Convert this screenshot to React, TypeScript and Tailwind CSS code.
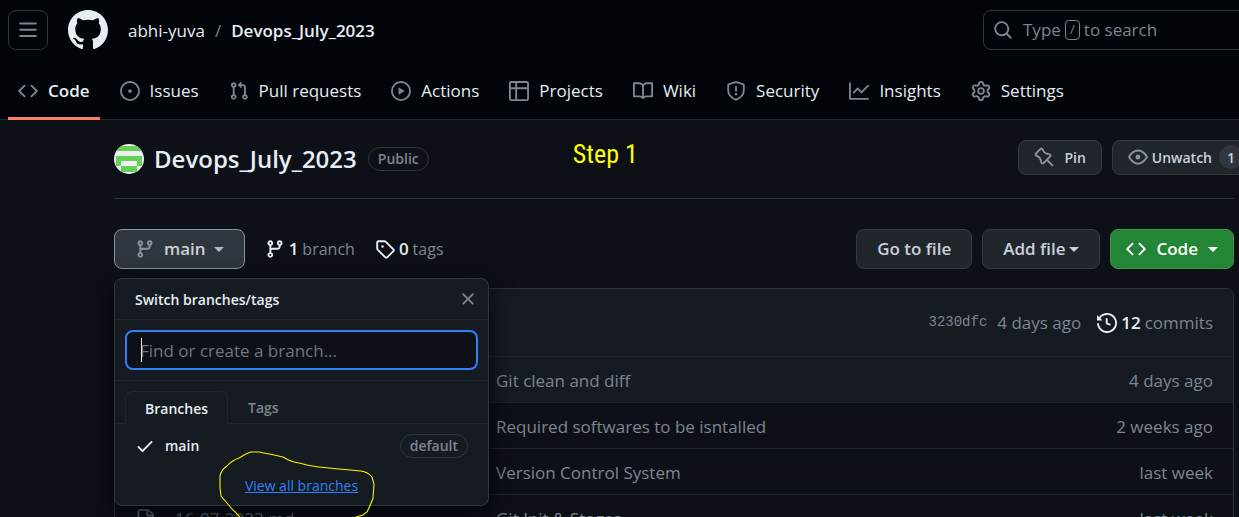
import type { ReactNode } from 'react';

const paths = {
  bars: 'M1 2.75A.75.75 0 0 1 1.75 2h12.5a.75.75 0 0 1 0 1.5H1.75A.75.75 0 0 1 1 2.75Zm0 5A.75.75 0 0 1 1.75 7h12.5a.75.75 0 0 1 0 1.5H1.75A.75.75 0 0 1 1 7.75ZM1.75 12h12.5a.75.75 0 0 1 0 1.5H1.75a.75.75 0 0 1 0-1.5Z',
  github:
    'M8 0c4.42 0 8 3.58 8 8a8.013 8.013 0 0 1-5.45 7.59c-.4.08-.55-.17-.55-.38 0-.27.01-1.13.01-2.2 0-.75-.25-1.23-.54-1.48 1.78-.2 3.65-.88 3.65-3.95 0-.88-.31-1.59-.82-2.15.08-.2.36-1.02-.08-2.12 0 0-.67-.22-2.2.82-.64-.18-1.32-.27-2-.27-.68 0-1.36.09-2 .27-1.53-1.03-2.2-.82-2.2-.82-.44 1.1-.16 1.92-.08 2.12-.51.56-.82 1.28-.82 2.15 0 3.06 1.86 3.75 3.64 3.95-.23.2-.44.55-.51 1.07-.46.21-1.61.55-2.33-.66-.15-.24-.6-.83-1.23-.82-.67.01-.27.38.01.53.34.19.73.9.82 1.13.16.45.68 1.31 2.69.94 0 .67.01 1.3.01 1.49 0 .21-.15.45-.55.38A7.995 7.995 0 0 1 0 8c0-4.42 3.58-8 8-8Z',
  search:
    'M10.68 11.74a6 6 0 0 1-7.922-8.982 6 6 0 0 1 8.982 7.922l3.04 3.04a.749.749 0 0 1-.326 1.275.749.749 0 0 1-.734-.215ZM11.5 7a4.499 4.499 0 1 0-8.997 0A4.499 4.499 0 0 0 11.5 7Z',
  code: 'm11.28 3.22 4.25 4.25a.75.75 0 0 1 0 1.06l-4.25 4.25a.749.749 0 0 1-1.275-.326.749.749 0 0 1 .215-.734L13.94 8l-3.72-3.72a.749.749 0 0 1 .326-1.275.749.749 0 0 1 .734.215Zm-6.56 0a.751.751 0 0 1 1.042.018.751.751 0 0 1 .018 1.042L2.06 8l3.72 3.72a.749.749 0 0 1-.326 1.275.749.749 0 0 1-.734-.215L.47 8.53a.75.75 0 0 1 0-1.06Z',
  issue:
    'M8 9.5a1.5 1.5 0 1 0 0-3 1.5 1.5 0 0 0 0 3ZM8 0a8 8 0 1 1 0 16A8 8 0 0 1 8 0ZM1.5 8a6.5 6.5 0 1 0 13 0 6.5 6.5 0 0 0-13 0Z',
  pull: 'M1.5 3.25a2.25 2.25 0 1 1 3 2.122v5.256a2.251 2.251 0 1 1-1.5 0V5.372A2.25 2.25 0 0 1 1.5 3.25Zm5.677-.177L9.573.677A.25.25 0 0 1 10 .854V2.5h1A2.5 2.5 0 0 1 13.5 5v5.628a2.251 2.251 0 1 1-1.5 0V5a1 1 0 0 0-1-1h-1v1.646a.25.25 0 0 1-.427.177L7.177 3.427a.25.25 0 0 1 0-.354ZM3.75 2.5a.75.75 0 1 0 0 1.5.75.75 0 0 0 0-1.5Zm0 9.5a.75.75 0 1 0 0 1.5.75.75 0 0 0 0-1.5Zm8.25.75a.75.75 0 1 0 1.5 0 .75.75 0 0 0-1.5 0Z',
  play: 'M8 0a8 8 0 1 1 0 16A8 8 0 0 1 8 0ZM1.5 8a6.5 6.5 0 1 0 13 0 6.5 6.5 0 0 0-13 0Zm4.879-2.773 4.264 2.559a.25.25 0 0 1 0 .428l-4.264 2.559A.25.25 0 0 1 6 10.559V5.442a.25.25 0 0 1 .379-.215Z',
  table:
    'M0 1.75C0 .784.784 0 1.75 0h12.5C15.216 0 16 .784 16 1.75v12.5A1.75 1.75 0 0 1 14.25 16H1.75A1.75 1.75 0 0 1 0 14.25ZM6.5 6.5v8h7.75a.25.25 0 0 0 .25-.25V6.5Zm8-1.5V1.75a.25.25 0 0 0-.25-.25H6.5V5Zm-13 1.5v7.75c0 .138.112.25.25.25H5v-8ZM5 5V1.5H1.75a.25.25 0 0 0-.25.25V5Z',
  book: 'M0 1.75A.75.75 0 0 1 .75 1h4.253c1.227 0 2.317.59 3 1.501A3.743 3.743 0 0 1 11.006 1h4.245a.75.75 0 0 1 .75.75v10.5a.75.75 0 0 1-.75.75h-4.507a2.25 2.25 0 0 0-1.591.659l-.622.621a.75.75 0 0 1-1.06 0l-.622-.621A2.25 2.25 0 0 0 5.258 13H.75a.75.75 0 0 1-.75-.75Zm7.251 10.324.004-5.073-.002-2.253A2.25 2.25 0 0 0 5.003 2.5H1.5v9h3.757a3.75 3.75 0 0 1 1.994.574ZM8.755 4.75l-.004 7.322a3.752 3.752 0 0 1 1.992-.572H14.5v-9h-3.495a2.25 2.25 0 0 0-2.25 2.25Z',
  shield:
    'M7.467.133a1.748 1.748 0 0 1 1.066 0l5.25 1.68A1.75 1.75 0 0 1 15 3.48V7c0 1.566-.32 3.182-1.303 4.682-.983 1.498-2.585 2.813-5.032 3.855a1.697 1.697 0 0 1-1.33 0c-2.447-1.042-4.049-2.357-5.032-3.855C1.32 10.182 1 8.566 1 7V3.48a1.75 1.75 0 0 1 1.217-1.667Zm.61 1.429a.25.25 0 0 0-.153 0l-5.25 1.68a.25.25 0 0 0-.174.238V7c0 1.358.275 2.666 1.057 3.86.784 1.194 2.121 2.34 4.366 3.297a.196.196 0 0 0 .154 0c2.245-.956 3.582-2.104 4.366-3.298C13.225 9.666 13.5 8.36 13.5 7V3.48a.251.251 0 0 0-.174-.237l-5.25-1.68ZM8.75 4.75v3a.75.75 0 0 1-1.5 0v-3a.75.75 0 0 1 1.5 0ZM9 10.5a1 1 0 1 1-2 0 1 1 0 0 1 2 0Z',
  graph:
    'M1.5 1.75V13.5h13.75a.75.75 0 0 1 0 1.5H.75a.75.75 0 0 1-.75-.75V1.75a.75.75 0 0 1 1.5 0Zm14.28 2.53-5.25 5.25a.75.75 0 0 1-1.06 0L7 7.06 4.28 9.78a.751.751 0 0 1-1.042-.018.751.751 0 0 1-.018-1.042l3.25-3.25a.75.75 0 0 1 1.06 0L10 7.94l4.72-4.72a.751.751 0 0 1 1.042.018.751.751 0 0 1 .018 1.042Z',
  gear: 'M8 0a8.2 8.2 0 0 1 .701.031C9.444.095 9.99.645 10.16 1.29l.288 1.107c.018.066.079.158.212.224.231.114.454.243.668.386.123.082.233.09.299.071l1.103-.303c.644-.176 1.392.021 1.82.63.27.385.506.792.704 1.218.315.675.111 1.422-.364 1.891l-.814.806c-.049.048-.098.147-.088.294.016.257.016.515 0 .772-.01.147.038.246.088.294l.814.806c.475.469.679 1.216.364 1.891a7.977 7.977 0 0 1-.704 1.217c-.428.61-1.176.807-1.82.63l-1.102-.302c-.067-.019-.177-.011-.3.071a5.909 5.909 0 0 1-.668.386c-.133.066-.194.158-.211.224l-.29 1.106c-.168.646-.715 1.196-1.458 1.26a8.006 8.006 0 0 1-1.402 0c-.743-.064-1.289-.614-1.458-1.26l-.289-1.106c-.018-.066-.079-.158-.212-.224a5.738 5.738 0 0 1-.668-.386c-.123-.082-.233-.09-.299-.071l-1.103.303c-.644.176-1.392-.021-1.82-.63a8.12 8.12 0 0 1-.704-1.218c-.315-.675-.111-1.422.363-1.891l.815-.806c.05-.048.098-.147.088-.294a6.214 6.214 0 0 1 0-.772c.01-.147-.038-.246-.088-.294l-.815-.806C.635 6.045.431 5.298.746 4.623a7.92 7.92 0 0 1 .704-1.217c.428-.61 1.176-.807 1.82-.63l1.102.302c.067.019.177.011.3-.071.214-.143.437-.272.668-.386.133-.066.194-.158.211-.224l.29-1.106C6.009.645 6.556.095 7.299.03 7.53.01 7.764 0 8 0Zm-.571 1.525c-.036.003-.108.036-.137.146l-.289 1.105c-.147.561-.549.967-.998 1.189-.173.086-.34.183-.5.29-.417.278-.97.423-1.529.27l-1.103-.303c-.109-.03-.175.016-.195.045-.22.312-.412.644-.573.99-.014.031-.021.11.059.19l.815.806c.411.406.562.957.53 1.456a4.709 4.709 0 0 0 0 .582c.032.499-.119 1.05-.53 1.456l-.815.806c-.081.08-.073.159-.059.19.162.346.353.677.573.989.02.03.085.076.195.046l1.102-.303c.56-.153 1.113-.008 1.53.27.161.107.328.204.501.29.447.222.85.629.997 1.189l.289 1.105c.029.109.101.143.137.146a6.6 6.6 0 0 0 1.142 0c.036-.003.108-.036.137-.146l.289-1.105c.147-.561.549-.967.998-1.189.173-.086.34-.183.5-.29.417-.278.97-.423 1.529-.27l1.103.303c.109.029.175-.016.195-.045.22-.313.411-.644.573-.99.014-.031.021-.11-.059-.19l-.815-.806c-.411-.406-.562-.957-.53-1.456a4.709 4.709 0 0 0 0-.582c-.032-.499.119-1.05.53-1.456l.815-.806c.081-.08.073-.159.059-.19a6.464 6.464 0 0 0-.573-.989c-.02-.03-.085-.076-.195-.046l-1.102.303c-.56.153-1.113.008-1.53-.27a4.44 4.44 0 0 0-.501-.29c-.447-.222-.85-.629-.997-1.189l-.289-1.105c-.029-.11-.101-.143-.137-.146a6.6 6.6 0 0 0-1.142 0ZM11 8a3 3 0 1 1-6 0 3 3 0 0 1 6 0ZM9.5 8a1.5 1.5 0 1 0-3.001.001A1.5 1.5 0 0 0 9.5 8Z',
  pin: 'm11.294.984 3.722 3.722a1.75 1.75 0 0 1-.504 2.826l-1.327.613a3.089 3.089 0 0 0-1.707 2.084l-.584 2.454c-.317 1.332-1.972 1.8-2.94.832L5.75 11.311 1.78 15.28a.749.749 0 1 1-1.06-1.06l3.969-3.97-2.204-2.204c-.968-.968-.5-2.623.832-2.94l2.454-.584a3.08 3.08 0 0 0 2.084-1.707l.613-1.327a1.75 1.75 0 0 1 2.826-.504ZM6.283 9.723l2.732 2.731a.25.25 0 0 0 .42-.119l.584-2.454a4.586 4.586 0 0 1 2.537-3.098l1.328-.613a.25.25 0 0 0 .072-.404l-3.722-3.722a.25.25 0 0 0-.404.072l-.613 1.328a4.584 4.584 0 0 1-3.098 2.537l-2.454.584a.25.25 0 0 0-.119.42l2.731 2.732Z',
  eye: 'M8 2c1.981 0 3.671.992 4.933 2.078 1.27 1.091 2.187 2.345 2.637 3.023a1.62 1.62 0 0 1 0 1.798c-.45.678-1.367 1.932-2.637 3.023C11.67 13.008 9.981 14 8 14c-1.981 0-3.671-.992-4.933-2.078C1.797 10.83.88 9.576.43 8.898a1.62 1.62 0 0 1 0-1.798c.45-.677 1.367-1.931 2.637-3.022C4.33 2.992 6.019 2 8 2ZM1.679 7.932a.12.12 0 0 0 0 .136c.411.622 1.241 1.75 2.366 2.717C5.176 11.758 6.527 12.5 8 12.5c1.473 0 2.825-.742 3.955-1.715 1.124-.967 1.954-2.096 2.366-2.717a.12.12 0 0 0 0-.136c-.412-.621-1.242-1.75-2.366-2.717C10.824 4.242 9.473 3.5 8 3.5c-1.473 0-2.825.742-3.955 1.715-1.124.967-1.954 2.096-2.366 2.717ZM8 10a2 2 0 1 1-.001-3.999A2 2 0 0 1 8 10Z',
  branch:
    'M9.5 3.25a2.25 2.25 0 1 1 3 2.122V6A2.5 2.5 0 0 1 10 8.5H6a1 1 0 0 0-1 1v1.128a2.251 2.251 0 1 1-1.5 0V5.372a2.25 2.25 0 1 1 1.5 0v1.836A2.493 2.493 0 0 1 6 7h4a1 1 0 0 0 1-1v-.628A2.25 2.25 0 0 1 9.5 3.25Zm-6 0a.75.75 0 1 0 1.5 0 .75.75 0 0 0-1.5 0Zm8.25-.75a.75.75 0 1 0 0 1.5.75.75 0 0 0 0-1.5ZM4.25 12a.75.75 0 1 0 0 1.5.75.75 0 0 0 0-1.5Z',
  tag: 'M1 7.775V2.75C1 1.784 1.784 1 2.75 1h5.025c.464 0 .91.184 1.238.513l6.25 6.25a1.75 1.75 0 0 1 0 2.474l-5.026 5.026a1.75 1.75 0 0 1-2.474 0l-6.25-6.25A1.752 1.752 0 0 1 1 7.775Zm1.5 0c0 .066.026.13.073.177l6.25 6.25a.25.25 0 0 0 .354 0l5.025-5.025a.25.25 0 0 0 0-.354l-6.25-6.25a.25.25 0 0 0-.177-.073H2.75a.25.25 0 0 0-.25.25ZM6 5a1 1 0 1 1 0 2 1 1 0 0 1 0-2Z',
  history:
    'm.427 1.927 1.215 1.215a8.002 8.002 0 1 1-1.6 5.685.75.75 0 1 1 1.493-.154 6.5 6.5 0 1 0 1.18-4.458l1.358 1.358A.25.25 0 0 1 3.896 6H.25A.25.25 0 0 1 0 5.75V2.104a.25.25 0 0 1 .427-.177ZM7.75 4a.75.75 0 0 1 .75.75v2.992l2.028.812a.75.75 0 0 1-.557 1.392l-2.5-1A.751.751 0 0 1 7 8.25v-3.5A.75.75 0 0 1 7.75 4Z',
  close:
    'M3.72 3.72a.75.75 0 0 1 1.06 0L8 6.94l3.22-3.22a.749.749 0 0 1 1.275.326.749.749 0 0 1-.215.734L9.06 8l3.22 3.22a.749.749 0 0 1-.326 1.275.749.749 0 0 1-.734-.215L8 9.06l-3.22 3.22a.751.751 0 0 1-1.042-.018.751.751 0 0 1-.018-1.042L6.94 8 3.72 4.78a.75.75 0 0 1 0-1.06Z',
  check:
    'M13.78 4.22a.75.75 0 0 1 0 1.06l-7.25 7.25a.75.75 0 0 1-1.06 0L2.22 9.28a.751.751 0 0 1 .018-1.042.751.751 0 0 1 1.042-.018L6 10.94l6.72-6.72a.75.75 0 0 1 1.06 0Z',
  file: 'M2 1.75C2 .784 2.784 0 3.75 0h6.586c.464 0 .909.184 1.237.513l2.914 2.914c.329.328.513.773.513 1.237v9.586A1.75 1.75 0 0 1 13.25 16h-9.5A1.75 1.75 0 0 1 2 14.25Zm1.75-.25a.25.25 0 0 0-.25.25v12.5c0 .138.112.25.25.25h9.5a.25.25 0 0 0 .25-.25V6h-2.75A1.75 1.75 0 0 1 9 4.25V1.5Zm6.75.062V4.25c0 .138.112.25.25.25h2.688l-.011-.013-2.914-2.914-.013-.011Z',
};

type IconName = keyof typeof paths;

function Icon({ name, className = 'size-5' }: { name: IconName; className?: string }) {
  return (
    <svg viewBox="0 0 16 16" fill="currentColor" aria-hidden="true" className={`shrink-0 ${className}`}>
      <path d={paths[name]} />
    </svg>
  );
}

function Caret({ className = '' }: { className?: string }) {
  return (
    <svg viewBox="0 0 10 5" fill="currentColor" aria-hidden="true" className={`h-[5px] w-[10px] shrink-0 ${className}`}>
      <path d="M0 0h10L5 5z" />
    </svg>
  );
}

const tabs: { icon: IconName; label: string; active?: boolean }[] = [
  { icon: 'code', label: 'Code', active: true },
  { icon: 'issue', label: 'Issues' },
  { icon: 'pull', label: 'Pull requests' },
  { icon: 'play', label: 'Actions' },
  { icon: 'table', label: 'Projects' },
  { icon: 'book', label: 'Wiki' },
  { icon: 'shield', label: 'Security' },
  { icon: 'graph', label: 'Insights' },
  { icon: 'gear', label: 'Settings' },
];

const rows: { name?: string; message: string; age: string }[] = [
  { message: 'Git clean and diff', age: '4 days ago' },
  { message: 'Required softwares to be isntalled', age: '2 weeks ago' },
  { message: 'Version Control System', age: 'last week' },
  { name: '16-07-2023.md', message: 'Git Init & Stages', age: 'last week' },
];

function Avatar() {
  return (
    <svg viewBox="0 0 30 30" className="size-[30px] shrink-0 rounded-full" aria-hidden="true">
      <rect width="30" height="30" fill="#f0f0f0" />
      <g fill="#62d156">
        <rect x="2" y="2" width="26" height="5" />
        <rect x="2" y="12" width="26" height="5" />
        <rect x="2" y="17" width="5" height="5" />
        <rect x="23" y="17" width="5" height="5" />
        <rect x="7" y="22" width="16" height="6" />
      </g>
    </svg>
  );
}

function Header() {
  return (
    <header className="border-b border-[#21262d] bg-[#010409]">
      <div className="flex h-[60px] items-center pl-2">
        <button
          aria-label="Open menu"
          className="flex size-10 items-center justify-center rounded-lg border border-[#30363d] text-[#7d8590]"
        >
          <Icon name="bars" />
        </button>
        <a href="#home" aria-label="Homepage" className="ml-5 text-[#e6edf3]">
          <Icon name="github" className="size-10" />
        </a>
        <nav className="ml-5 flex items-center gap-[10px] pt-0.5 text-[17px]">
          <a href="#owner">abhi-yuva</a>
          <span className="text-[#7d8590]">/</span>
          <a href="#repo" className="font-semibold">
            Devops_July_2023
          </a>
        </nav>
        <button className="-mr-2 ml-auto flex h-10 w-[264px] items-center rounded-lg border border-[#30363d] pl-[9px] text-[17px] text-[#7d8590]">
          <Icon name="search" />
          <span className="ml-[10px]">Type</span>
          <kbd className="mx-1 flex h-5 w-[15px] items-center justify-center rounded border border-[#7d8590] font-[inherit] text-[13px]">
            /
          </kbd>
          <span>to search</span>
        </button>
      </div>
      <nav className="flex gap-[10px] px-2">
        {tabs.map((t) => (
          <a
            key={t.label}
            href={`#${t.label}`}
            className={`-mb-px flex h-[60px] items-center gap-[10px] border-b-[3px] px-[10px] pt-1 text-[17px] ${
              t.active ? 'border-[#f78166] font-semibold' : 'border-transparent'
            }`}
          >
            <span className="text-[#7d8590]">
              <Icon name={t.icon} />
            </span>
            {t.label}
          </a>
        ))}
      </nav>
    </header>
  );
}

function Button({ children, className }: { children: ReactNode; className: string }) {
  return <button className={`flex items-center rounded-lg border font-semibold ${className}`}>{children}</button>;
}

function BranchMenu() {
  return (
    <div className="absolute left-0 top-full z-10 mt-[9px] w-[375px] rounded-lg border border-[#30363d] bg-[#161b22] text-[14px] shadow-[0_8px_24px_#010409]">
      <div className="flex h-[41px] items-center justify-between border-b border-[#21262d] pl-5 pr-[10px]">
        <h2 className="font-semibold">Switch branches/tags</h2>
        <button aria-label="Close" className="text-[#7d8590]">
          <Icon name="close" />
        </button>
      </div>
      <div className="relative border-b border-[#21262d] p-[10px]">
        <input
          aria-label="Find or create a branch"
          placeholder="Find or create a branch..."
          className="block h-10 w-full rounded-lg border-2 border-[#2f81f7] bg-[#0d1117] px-[13px] text-[17px] outline-none placeholder:text-[#6e7681]"
        />
        <span className="absolute left-[26px] top-[18px] h-6 w-px bg-[#e6edf3]" />
      </div>
      <div role="tablist" className="flex border-b border-[#21262d] px-[10px] pt-[10px]">
        <button
          role="tab"
          aria-selected="true"
          className="-mb-px h-[33px] rounded-t-lg border border-b-0 border-[#21262d] bg-[#161b22] px-[19px] font-semibold"
        >
          Branches
        </button>
        <button role="tab" aria-selected="false" className="px-5 font-semibold text-[#7d8590]">
          Tags
        </button>
      </div>
      <div className="flex h-[43px] items-center pl-5 pr-5">
        <Icon name="check" />
        <span className="ml-[10px] font-semibold">main</span>
        <span className="ml-auto rounded-full border border-[#30363d] px-[9px] leading-[22px] font-semibold text-[#7d8590]">
          default
        </span>
      </div>
      <div className="relative h-[38px] pt-2 text-center">
        <a href="#branches" className="text-[#2f81f7] underline">
          View all branches
        </a>
        <svg
          viewBox="0 0 158 72"
          fill="none"
          stroke="#fff200"
          strokeWidth="1.1"
          aria-hidden="true"
          className="pointer-events-none absolute left-[104px] top-[-17px] h-[72px] w-[158px]"
        >
          <path d="M21 67 L14 60 L8 53 L2 46 L1 38 L1 26 Q2 20 8 16 Q12 11 20 8 Q28 3 32 2 L40 2 Q56 5 64 7 Q72 12 80 13 Q90 16 100 17 L120 19 L142 21 Q149 22 153 27 L155 34 L154 48 Q152 54 148 62 L144 65 L134 68" />
        </svg>
      </div>
    </div>
  );
}

export default function App() {
  return (
    <div className="h-screen overflow-hidden bg-[#0d1117] font-['Open_Sans','Noto_Sans',sans-serif] text-[#e6edf3]">
      <Header />
      <main className="pl-[114px]">
        <div className="mr-[5px] flex h-[79px] items-center border-b border-[#30363d]">
          <Avatar />
          <h1 className="ml-[10px] text-2xl font-semibold">Devops_July_2023</h1>
          <span className="ml-[11px] rounded-full border border-[#30363d] px-[9px] text-[14px] leading-[22px] font-semibold text-[#7d8590]">
            Public
          </span>
          <p className="ml-[144px] self-start pt-4 font-['Roboto_Condensed','Roboto',sans-serif] text-[26px] leading-9 text-[#ffff00]">
            Step 1
          </p>
          <div className="-mr-[25px] -mt-1 ml-auto flex shrink-0 gap-[10px] text-[14px] text-[#c9d1d9]">
            <Button className="h-[35px] border-[#363b42] bg-[#21262d] px-[15px]">
              <span className="mr-[10px] -scale-x-100 text-[#8b949e]">
                <Icon name="pin" />
              </span>
              Pin
            </Button>
            <Button className="h-[35px] border-[#363b42] bg-[#21262d] px-[15px]">
              <span className="mr-1 text-[#8b949e]">
                <Icon name="eye" />
              </span>
              Unwatch
              <span className="ml-[7px] flex size-6 items-center justify-center rounded-full bg-[#30363d]">1</span>
            </Button>
          </div>
        </div>

        <div className="mr-[5px] mt-[30px] flex h-10 items-center text-[17px]">
          <div className="relative mr-5">
            <Button className="h-10 border-[#8b949e] bg-[#30363d] px-5 text-[#c9d1d9]">
              <span className="mr-[9px] text-[#8b949e]">
                <Icon name="branch" />
              </span>
              main
              <Caret className="ml-2 text-[#b1bac4]" />
            </Button>
            <BranchMenu />
          </div>
          <a href="#branches" className="flex items-center gap-1">
            <Icon name="branch" />
            <strong className="font-semibold">1</strong>
            <span className="text-base text-[#7d8590]">branch</span>
          </a>
          <a href="#tags" className="ml-5 flex items-center gap-1">
            <Icon name="tag" />
            <strong className="font-semibold">0</strong>
            <span className="text-base text-[#7d8590]">tags</span>
          </a>
          <div className="ml-auto flex gap-[10px] text-[#c9d1d9]">
            <Button className="h-10 border-[#363b42] bg-[#21262d] px-5">Go to file</Button>
            <Button className="h-10 border-[#363b42] bg-[#21262d] px-5">
              Add file
              <Caret className="ml-1" />
            </Button>
            <Button className="h-10 border-[#3b9449] bg-[#238636] px-[15px] text-white">
              <Icon name="code" className="mr-[10px] size-5" />
              Code
              <Caret className="ml-[10px]" />
            </Button>
          </div>
        </div>

        <section className="mr-[5px] mt-[19px] rounded-t-lg border border-[#30363d] text-[17px] text-[#7d8590]">
          <div className="flex h-[67px] items-center justify-end rounded-t-lg bg-[#161b22] px-5">
            <a href="#commit" className="font-['Liberation_Mono',monospace] text-[14px]">
              3230dfc
            </a>
            <span className="ml-[10px]">4 days ago</span>
            <a href="#commits" className="ml-4 flex items-center gap-1">
              <span className="text-[#e6edf3]">
                <Icon name="history" />
              </span>
              <strong className="font-semibold text-[#e6edf3]">12</strong>
              commits
            </a>
          </div>
          <table className="w-full table-fixed border-collapse">
            <tbody>
              {rows.map((r) => (
                <tr key={r.message} className="h-[46px] border-t border-[#21262d] first:bg-[#161b22]">
                  <td className="w-[381px] pl-5 pt-0.5">
                    {r.name && (
                      <span className="flex items-center gap-5">
                        <Icon name="file" />
                        {r.name}
                      </span>
                    )}
                  </td>
                  <td className="pt-0.5">{r.message}</td>
                  <td className="w-[160px] pr-5 pt-0.5 text-right">{r.age}</td>
                </tr>
              ))}
            </tbody>
          </table>
        </section>
      </main>
    </div>
  );
}
